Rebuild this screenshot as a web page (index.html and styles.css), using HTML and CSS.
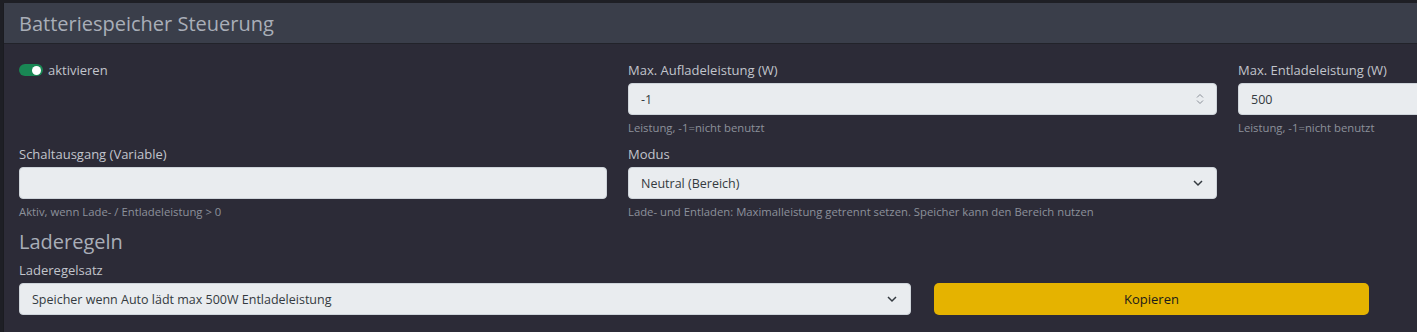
FILE: index.html
```html
<!DOCTYPE html>
<html lang="de">
<head>
    <meta charset="UTF-8">
    <title>Batteriespeicher Steuerung</title>
    <link rel="stylesheet" href="styles.css">
</head>
<body>
    <div class="card">
        <div class="card-header">
            <h1 class="card-title">Batteriespeicher Steuerung</h1>
        </div>
        <div class="card-body">
            <div class="form-grid">
                <div class="field">
                    <label class="switch">
                        <span class="switch-track"><span class="switch-knob"></span></span>
                        aktivieren
                    </label>
                </div>
                <div class="field">
                    <label for="maxLaden">Max. Aufladeleistung (W)</label>
                    <div class="input number">
                        <span>-1</span>
                        <svg class="spin" width="8" height="12" viewBox="0 0 8 12">
                            <path d="M1 4.5 L4 1.5 L7 4.5 M1 7.5 L4 10.5 L7 7.5" fill="none" stroke="#8a8f98" stroke-width="1"/>
                        </svg>
                    </div>
                    <p class="help">Leistung, -1=nicht benutzt</p>
                </div>
                <div class="field">
                    <label for="maxEntladen">Max. Entladeleistung (W)</label>
                    <div class="input"><span>500</span></div>
                    <p class="help">Leistung, -1=nicht benutzt</p>
                </div>

                <div class="field">
                    <label for="schaltausgang">Schaltausgang (Variable)</label>
                    <div class="input"></div>
                    <p class="help">Aktiv, wenn Lade- / Entladeleistung &gt; 0</p>
                </div>
                <div class="field">
                    <label for="modus">Modus</label>
                    <div class="input select">
                        <span>Neutral (Bereich)</span>
                        <svg class="chevron" width="12" height="8" viewBox="0 0 12 8">
                            <path d="M2 2 L6 6 L10 2" fill="none" stroke="#343a40" stroke-width="1.5"/>
                        </svg>
                    </div>
                    <p class="help">Lade- und Entladen: Maximalleistung getrennt setzen. Speicher kann den Bereich nutzen</p>
                </div>
            </div>

            <h2 class="section-title">Laderegeln</h2>
            <div class="rules-row">
                <div class="field">
                    <label for="regelsatz">Laderegelsatz</label>
                    <div class="input select">
                        <span>Speicher wenn Auto lädt max 500W Entladeleistung</span>
                        <svg class="chevron" width="12" height="8" viewBox="0 0 12 8">
                            <path d="M2 2 L6 6 L10 2" fill="none" stroke="#343a40" stroke-width="1.5"/>
                        </svg>
                    </div>
                </div>
                <div class="field">
                    <button class="btn-copy">Kopieren</button>
                </div>
            </div>
        </div>
    </div>
</body>
</html>
```

FILE: styles.css
```css
body {
    margin: 0;
    padding: 0;
    background-color: #1e1f25;
    font-family: "Open Sans", "Noto Sans", sans-serif;
    overflow: hidden;
}
.card {
    margin: 3px 0 0 3px;
    width: 1900px;
    background-color: #2c2b37;
    border-left: 1px solid #1b1c21;
    min-height: 340px;
}
.card-header {
    height: 40px;
    background-color: #3a3e4a;
    border-bottom: 1px solid #22232a;
    padding: 0 15px;
    display: flex;
    align-items: center;
}
.card-title {
    margin: 0;
    font-size: 20px;
    font-weight: 400;
    color: #a9aeb8;
}
.card-body {
    padding: 18px 15px 0 15px;
}
.form-grid {
    display: grid;
    grid-template-columns: 588px 589px 589px;
    column-gap: 21px;
    row-gap: 11px;
}
.field label {
    display: block;
    font-size: 13px;
    line-height: 16px;
    color: #c2c5cc;
    margin-bottom: 5px;
}
.switch {
    display: flex !important;
    align-items: center;
    gap: 5px;
}
.switch-track {
    width: 24px;
    height: 12px;
    border-radius: 7px;
    background-color: #198754;
    position: relative;
}
.switch-knob {
    position: absolute;
    right: 2px;
    top: 1.5px;
    width: 9px;
    height: 9px;
    border-radius: 50%;
    background-color: #fff;
}
.input {
    height: 32px;
    box-sizing: border-box;
    background-color: #e9ecef;
    border: 1px solid #ced4da;
    border-radius: 4px;
    padding: 0 12px;
    display: flex;
    align-items: center;
    justify-content: space-between;
    font-size: 12.5px;
    color: #343a40;
}
.help {
    margin: 6px 0 0 0;
    font-size: 11.3px;
    line-height: 14px;
    color: #8c919b;
}
.section-title {
    margin: 11px 0 8px 0;
    font-size: 20px;
    line-height: 24px;
    font-weight: 400;
    color: #a9aeb8;
}
.rules-row {
    display: grid;
    grid-template-columns: 892px 435px;
    column-gap: 23px;
    align-items: end;
}
.btn-copy {
    width: 100%;
    height: 32px;
    border: none;
    border-radius: 5px;
    background-color: #e5b300;
    color: #1a1a1a;
    font-family: inherit;
    font-size: 13px;
}
```
